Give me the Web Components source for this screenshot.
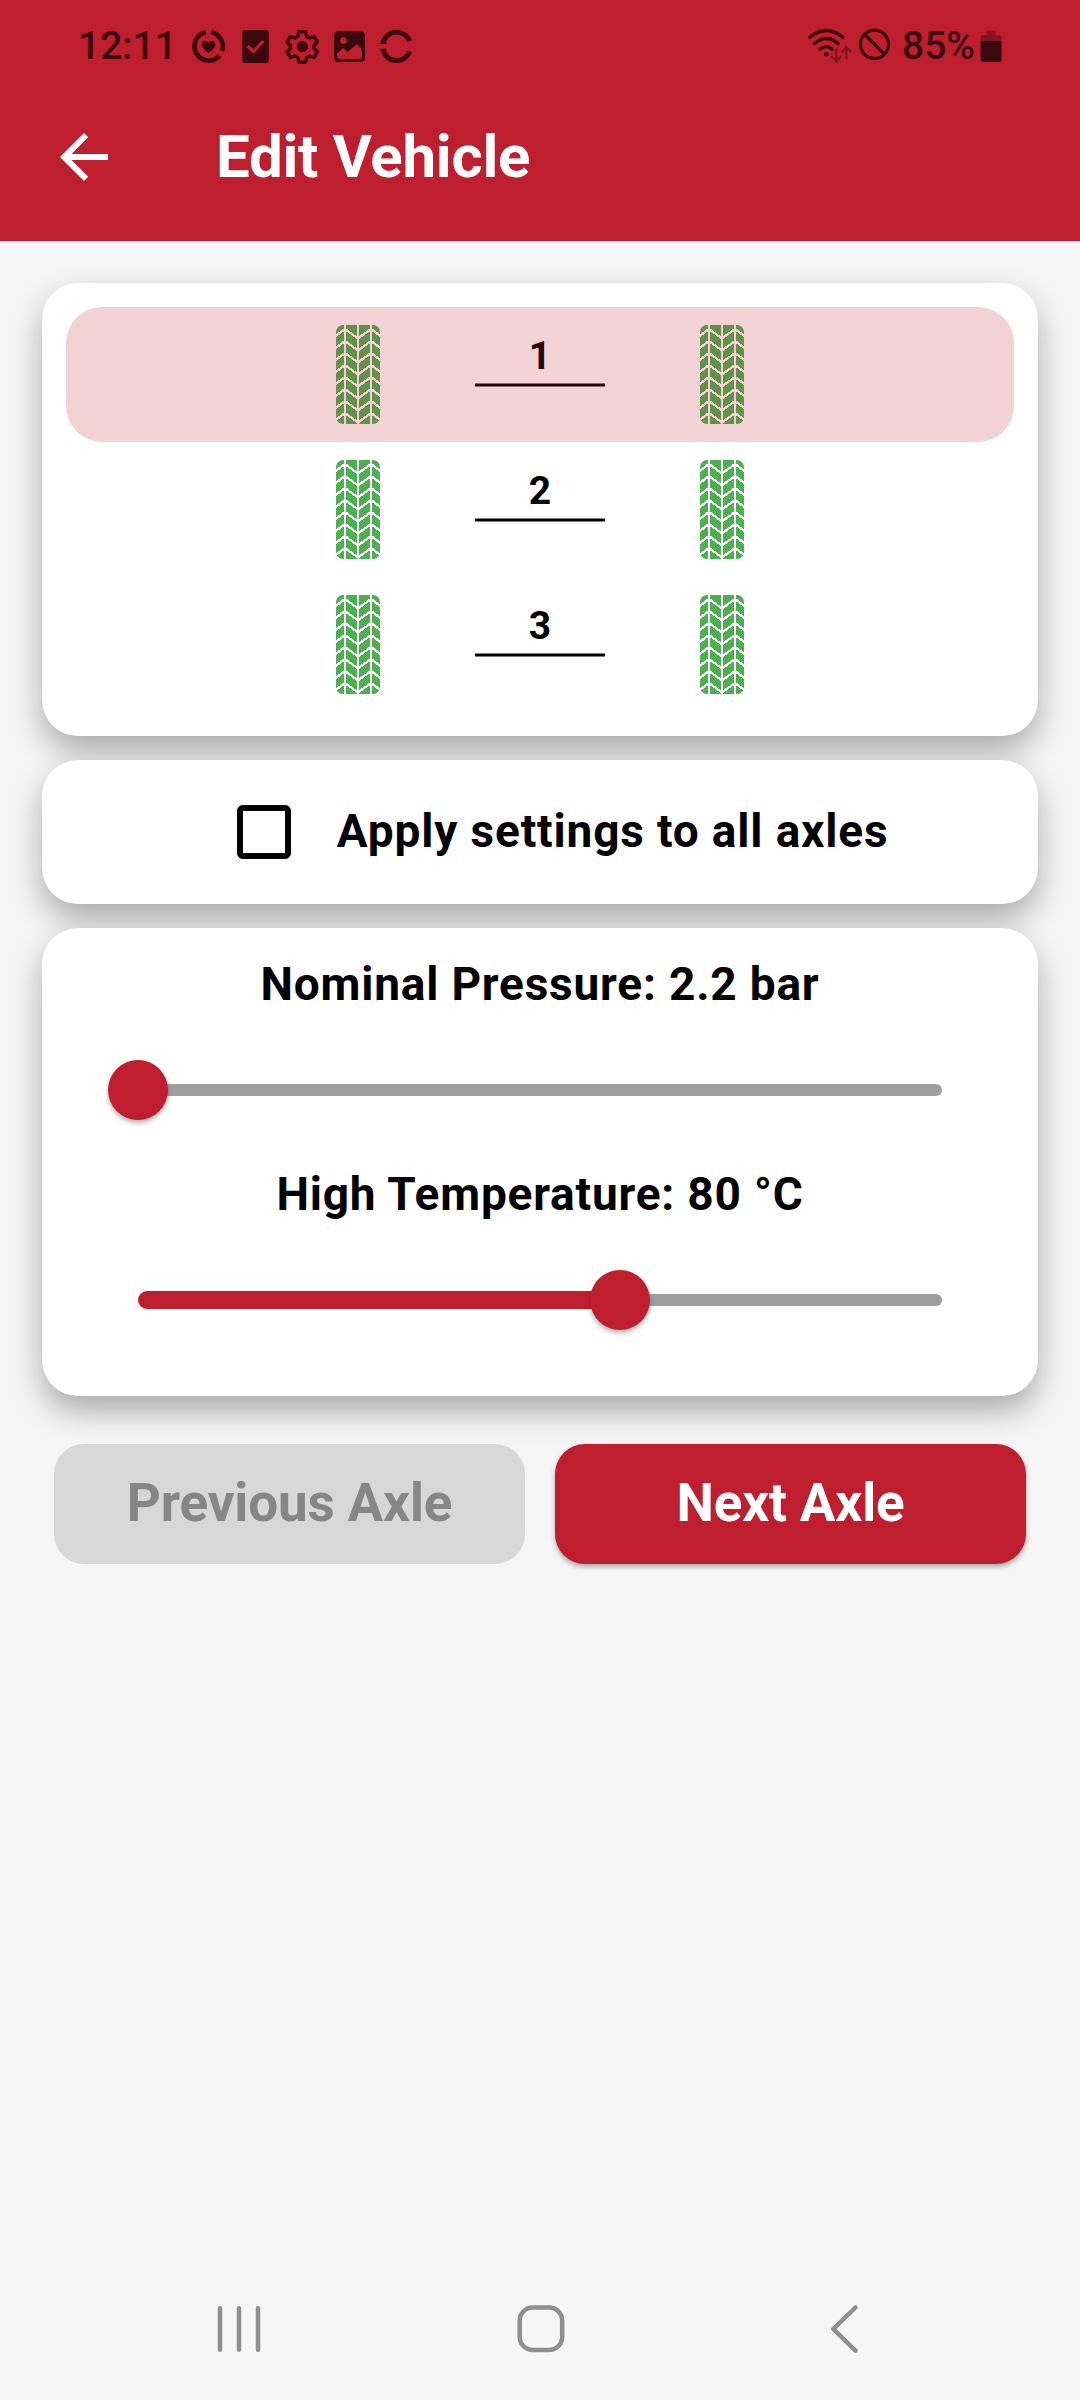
<!DOCTYPE html>
<html lang="en"><head><meta charset="utf-8"><title>Edit Vehicle</title>
<style>html,body{margin:0;background:#f5f5f5;font-family:Roboto,sans-serif}</style></head>
<body><edit-vehicle-screen></edit-vehicle-screen>
<script>
const define=(name,html)=>customElements.define(name,class extends HTMLElement{
  constructor(){super();this.attachShadow({mode:'open'}).innerHTML=typeof html==='function'?html(this):html;}
});
define('status-bar',`<style>:host{display:flex;box-sizing:border-box;height:84px;padding:0 78px 0 78px;color:#3a090d;font:500 39px/46px Roboto,sans-serif;justify-content:space-between}
.g{display:flex;height:46px;margin-top:23px}svg{display:block;margin-top:1px}</style>
<div class="g"><span style="width:108px">12:11</span>
<svg width="240" height="44" viewBox="186 24 240 44" fill="none" stroke="#3a090d">
<g stroke-width="4.6"><path d="M211.3 32.3A14.3 14.3 0 0 1 222 51M219.5 55.7A14.3 14.3 0 1 1 205.7 32.3"/></g>
<path fill="#3a090d" stroke="none" d="M208.5 53.3C205 50 201.6 47.5 201.6 44.2c0-4.2 5-4.6 6.9-1.5 1.9-3.1 6.9-2.7 6.9 1.5 0 3.3-3.4 5.8-6.9 9.1z"/>
<rect x="242.3" y="30" width="26.5" height="33" rx="3" fill="#3a090d" stroke="none"/><path d="M247.5 46l6 5.5L263.5 41" stroke="#be1e2d" stroke-width="3.2"/>
<path stroke-width="3.4" stroke-linejoin="round" d="M299 31.7h6.500l1.100 4.600 3 1.700 4.500-1.400 3.300 5.600-3.400 3.200v3.200l3.400 3.200-3.300 5.600-4.500-1.400-3 1.700-1.100 4.600H299l-1.100-4.600-3-1.700-4.500 1.400-3.300-5.600 3.400-3.200v-3.200l-3.400-3.200 3.300-5.600 4.500 1.400 3-1.700z"/><circle cx="302.3" cy="46.5" r="5.6" fill="#3a090d" stroke="none"/>
<path fill="#3a090d" stroke="none" fill-rule="evenodd" d="M339 31h21q5 0 5 5v21q0 5-5 5H339q-5 0-5-5V36q0-5 5-5zM337 53.5v3q0 2.500 2.500 2.500h20q2.500 0 2.500-2.500V50l-5-6-9.500 8-4-4zM343.5 37a3.500 3.500 0 1 0 .01 0z"/>
<path stroke-width="4.8" d="M383 43.7A13.8 13.8 0 0 1 409.6 41.2M383 49A13.8 13.8 0 0 0 409.6 51.5"/><path d="M380.5 43.2h6M380.5 49.5h6" stroke-width="1.5"/>
</svg></div>
<div class="g"><svg width="92" height="44" viewBox="805 24 92 44" fill="none" stroke="#3a090d" stroke-linecap="round">
<g stroke-width="3.2"><path d="M809.5 37.5Q826.5 23.5 843 37.5M814.5 43.5Q826.5 33.5 838 43.5M820 49.2Q826.5 44 832 49.2"/></g><circle cx="826.3" cy="54.3" r="2.2" fill="#3a090d" stroke="none"/>
<g stroke="#84151f" stroke-width="2.4"><path d="M836.3 50v10.5M832 57l4.3 4.3 4.200-4.300M846.5 58V47.5M842.5 51.5l4-4.200 4 4.200"/></g>
<circle cx="874.5" cy="44.3" r="14.1" stroke-width="3.2"/><path stroke-width="3.2" d="M864.8 34.5l19.5 19.7"/></svg>
<span style="width:78px;margin-left:5px">85%</span>
<svg width="22" height="44" viewBox="980.5 24 22 44"><path fill="#84151f" d="M981 41v-3q0-3 3-3h3v-3q0-1.500 1.500-1.500h6q1.500 0 1.500 1.500v3h3q3 0 3 3v3z"/><path fill="#3a090d" d="M981 41h21v18q0 3-3 3h-15q-3 0-3-3z"/></svg></div>`);
define('app-bar',`<style>:host{display:flex;align-items:center;height:157px;box-sizing:border-box;padding:0 48px 11px;color:#fff}
svg{width:72px;height:72px;fill:#fff}slot{display:block}.t{margin-left:96px;font:700 60px/72px Roboto,sans-serif;letter-spacing:-.27px}</style>
<svg viewBox="0 0 24 24"><path d="M20 11H7.830l5.590-5.590L12 4l-8 8 8 8 1.410-1.410L7.830 13H20v-2z"/></svg><div class="t"><slot></slot></div>`);
define('surface-card',`<style>:host{display:block;box-sizing:border-box;background:#fff;border-radius:36px;box-shadow:0 15px 33px -1px rgba(0,0,0,.32)}</style><slot></slot>`);
define('tire-icon',()=>{let z='';for(let i=0;i<8;i++){const y=4+i*12;z+=`M-1 ${y+7.5}L9 ${y}L22 ${y+9.5}L35 ${y}L45 ${y+7.5}`}
return `<style>:host{display:block;width:44px;height:99px}svg{display:block}</style><svg width="44" height="99"><defs><mask id="m"><rect width="44" height="99" rx="7" fill="#fff"/><path d="M9 0V99M22 0V99M35 0V99" stroke="#000" stroke-width="2"/><path d="${z}" fill="none" stroke="#000" stroke-width="2.3" shape-rendering="crispEdges"/></mask></defs><rect width="44" height="99" fill="#4caf50" mask="url(#m)"/></svg>`});
define('axle-row',`<style>:host{display:flex;position:relative;box-sizing:border-box;height:135px;padding-top:18px;justify-content:center}
:host([selected])::after{content:"";position:absolute;inset:0;border-radius:36px;background:rgba(190,30,45,.2)}
.a{width:130px;margin:0 95px;text-align:center;font:700 39px/46px Roboto,sans-serif}.n{height:50px;padding-top:8px}
.l{height:4px;background:linear-gradient(rgba(0,0,0,.5) 1px,#000 1px,#000 3px,rgba(0,0,0,.5) 3px)}</style>
<tire-icon></tire-icon><div class="a"><div class="n"><slot></slot></div><div class="l"></div></div><tire-icon></tire-icon>`);
define('check-option',`<style>:host{display:flex;align-items:center;height:144px;padding-left:186.3px;font:700 46px/56px Roboto,sans-serif;letter-spacing:.84px}svg{width:72px;height:72px;margin-right:36.5px}span{padding-bottom:2px}</style>
<svg viewBox="0 0 24 24"><path d="M19 5v14H5V5h14m0-2H5c-1.100 0-2 .9-2 2v14c0 1.100.9 2 2 2h14c1.100 0 2-.9 2-2V5c0-1.100-.9-2-2-2z"/></svg><span><slot></slot></span>`);
define('value-slider',el=>`<style>:host{display:block;height:210px}.l{height:56px;text-align:center;font:700 46px/56px Roboto,sans-serif;letter-spacing:.8px}
.s{display:flex;align-items:center;height:60px;margin:48px 96px 0}.f{width:${el.getAttribute('value')}%;height:18px;background:#be1e2d;border-radius:9px 0 0 9px}.r{flex:1;height:12px;background:#9e9e9e;border-radius:0 6px 6px 0}
.k{flex:none;width:60px;height:60px;margin:0 -30px;border-radius:50%;background:#be1e2d;box-shadow:0 3px 5px rgba(0,0,0,.3);z-index:1}</style>
<div class="l"><slot></slot></div><div class="s"><div class="f"></div><div class="k"></div><div class="r"></div></div>`);
define('axle-button',`<style>:host{flex:1;display:flex;align-items:center;justify-content:center;height:120px;box-sizing:border-box;padding-bottom:2px;border-radius:30px;background:#be1e2d;color:#fff;font:700 53px/64px Roboto,sans-serif;letter-spacing:-.15px;box-shadow:0 3px 5px rgba(0,0,0,.3)}:host([disabled]){background:#d7d7d7;color:#868686;box-shadow:none}</style><slot></slot>`);
define('nav-bar',`<style>:host{display:flex;height:144px;background:#f6f6f6;justify-content:space-between;align-items:center;padding:0 210px;box-sizing:border-box}svg{display:block;width:60px;height:60px;fill:none;stroke:#8f8f8f;stroke-width:4.5;stroke-linecap:round;stroke-linejoin:round}</style>
<svg viewBox="210 2298 60 60"><path d="M220 2308.3v41.5M239 2308.3v41.5M258 2308.3v41.5"/></svg><svg viewBox="510 2298 60 60"><rect x="519.7" y="2307.5" width="42.5" height="42.5" rx="13"/></svg><svg viewBox="810 2298 60 60"><path d="M855.5 2307.5L833.3 2329l22.2 21.7"/></svg>`);
define('edit-vehicle-screen',`<style>:host{display:flex;flex-direction:column;width:1080px;height:2400px;overflow:hidden;background:#f5f5f5}
header{background:#be1e2d}main{flex:1;display:flex;flex-direction:column;gap:24px;padding:42px 42px 0}.x{padding:24px}.s{height:468px;padding-top:28px}.b{display:flex;gap:30px;padding:24px 12px 0}</style>
<header><status-bar></status-bar><app-bar>Edit Vehicle</app-bar></header>
<main><surface-card class="x"><axle-row selected>1</axle-row><axle-row>2</axle-row><axle-row>3</axle-row></surface-card>
<surface-card><check-option>Apply settings to all axles</check-option></surface-card>
<surface-card class="s"><value-slider value="0">Nominal Pressure: 2.2 bar</value-slider><value-slider value="60">High Temperature: 80 °C</value-slider></surface-card>
<div class="b"><axle-button disabled>Previous Axle</axle-button><axle-button>Next Axle</axle-button></div></main><nav-bar></nav-bar>`);
</script></body></html>
